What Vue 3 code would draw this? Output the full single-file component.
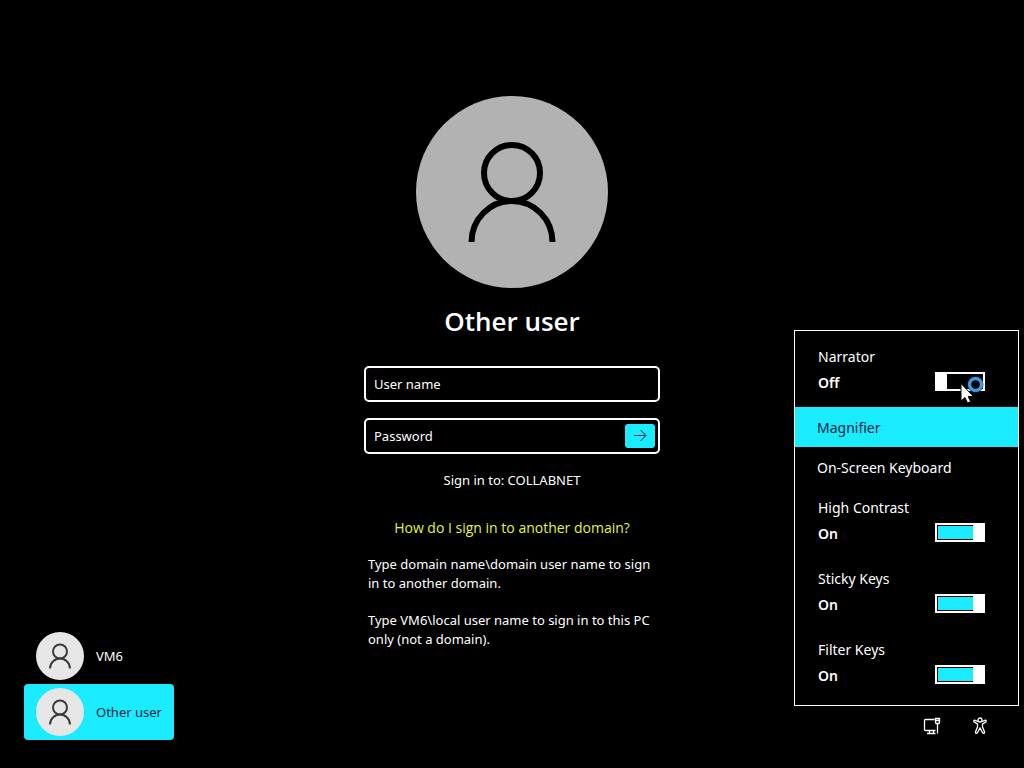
<script setup>
import { ref } from 'vue'

const users = ref([
  { name: 'VM6', selected: false },
  { name: 'Other user', selected: true },
])
const narrator = ref(false)
const toggles = ref([
  { id: 'contrast', label: 'High Contrast', on: true },
  { id: 'sticky', label: 'Sticky Keys', on: true },
  { id: 'filter', label: 'Filter Keys', on: true },
])
const userName = ref('')
const password = ref('')
</script>

<template>
  <div class="screen">
    <nav class="users" aria-label="Users">
      <button
        v-for="user in users"
        :key="user.name"
        type="button"
        class="user"
        :class="{ selected: user.selected }"
      >
        <span class="user-avatar">
          <svg viewBox="0 0 48 48" aria-hidden="true">
            <circle cx="24" cy="19.500" r="7" />
            <path d="M14 36.500a10 10 0 0 1 20 0" />
          </svg>
        </span>
        <span>{{ user.name }}</span>
      </button>
    </nav>

    <main class="login">
      <svg class="avatar" viewBox="0 0 192 192" aria-hidden="true">
        <circle class="avatar-disc" cx="96" cy="96" r="96" />
        <circle class="avatar-line" cx="96" cy="77" r="28" />
        <path class="avatar-line" d="M55.500 146a40.500 41 0 0 1 81 0" />
      </svg>
      <h1>Other user</h1>
      <form class="fields" @submit.prevent>
        <div class="field">
          <input v-model="userName" type="text" placeholder="User name" aria-label="User name" />
        </div>
        <div class="field">
          <input v-model="password" type="password" placeholder="Password" aria-label="Password" />
          <button type="submit" class="submit" aria-label="Submit">
            <svg viewBox="0 0 30 24" aria-hidden="true">
              <path d="M9 11.500H21M15.500 6L21 11.500L15.500 17" />
            </svg>
          </button>
        </div>
      </form>
      <p class="domain">Sign in to: COLLABNET</p>
      <a class="help" href="#">How do I sign in to another domain?</a>
      <div class="hints">
        <p>Type domain name\domain user name to sign in to another domain.</p>
        <p>Type VM6\local user name to sign in to this PC only (not a domain).</p>
      </div>
    </main>

    <aside class="side">
      <section class="panel" aria-label="Accessibility">
        <div class="option">
          <label for="narrator">Narrator</label>
          <div class="state">
            <strong>{{ narrator ? 'On' : 'Off' }}</strong>
            <input id="narrator" v-model="narrator" class="switch" type="checkbox" />
          </div>
          <svg class="pointer" viewBox="0 0 30 32" aria-hidden="true">
            <circle class="busy-back" cx="18.500" cy="12.500" r="6" />
            <circle class="busy" cx="18.500" cy="12.500" r="6" />
            <path class="arrow" d="M4 11.500V29L8 25.500L10.500 31L13.600 29.600L11.200 24.500H16.500Z" />
          </svg>
        </div>
        <button type="button" class="action active">Magnifier</button>
        <button type="button" class="action">On-Screen Keyboard</button>
        <div v-for="item in toggles" :key="item.id" class="option">
          <label :for="item.id">{{ item.label }}</label>
          <div class="state">
            <strong>{{ item.on ? 'On' : 'Off' }}</strong>
            <input :id="item.id" v-model="item.on" class="switch" type="checkbox" />
          </div>
        </div>
      </section>
      <div class="tools">
        <button type="button" class="tool" aria-label="Network">
          <svg viewBox="0 0 20 20" aria-hidden="true">
            <path d="M12.500 3.500H3.500a1 1 0 0 0-1 1V13.500a1 1 0 0 0 1 1H13.500M5 17.500H13.500M7.500 14.500V17.500M11.500 14.500V17.500M13.500 2.500H17.500V6.500a1 1 0 0 1-1 1H14.500a1 1 0 0 1-1-1ZM13.500 4.500H17.500M15.500 7.500V17.500" />
          </svg>
        </button>
        <button type="button" class="tool" aria-label="Accessibility">
          <svg viewBox="0 0 20 20" aria-hidden="true">
            <circle cx="10" cy="4" r="2" />
            <path d="M8 5.500L5.200 4.300C3.800 3.800 3.200 5.600 4.400 6.200L7.500 7.800V11L5.500 15.800C5 17.300 6.700 18 7.400 16.600L10 12L12.600 16.600C13.300 18 15 17.300 14.500 15.800L12.500 11V7.800L15.600 6.200C16.800 5.600 16.200 3.800 14.800 4.300L12 5.500" />
          </svg>
        </button>
      </div>
    </aside>
  </div>
</template>

<style>
body {
  margin: 0;
  background: #000;
}
</style>

<style scoped>
.screen {
  display: grid;
  grid-template-columns: minmax(0, 1fr) 296px minmax(0, 1fr);
  box-sizing: border-box;
  min-height: 100vh;
  background: #000;
  color: #fff;
  font-family: "Noto Sans", "Open Sans", sans-serif;
  font-size: 13px;
}

button {
  padding: 0;
  border: 0;
  background: none;
  color: inherit;
  font: inherit;
}

h1,
p {
  margin: 0;
}

svg {
  display: block;
}

.users {
  display: flex;
  flex-direction: column;
  align-items: flex-start;
  align-self: end;
  padding: 0 0 28px 24px;
}

.user {
  display: flex;
  align-items: center;
  gap: 12px;
  width: 150px;
  height: 56px;
  padding-left: 12px;
  border-radius: 4px;
}

.user.selected {
  background: #1aebff;
  color: #04263c;
}

.user-avatar {
  width: 48px;
  height: 48px;
  border-radius: 50%;
  background: #e6e6e6;
}

.user-avatar svg {
  fill: none;
  stroke: #3c3c3c;
  stroke-width: 2;
}

.login {
  display: flex;
  flex-direction: column;
  align-items: center;
  padding-top: 96px;
}

.avatar {
  width: 192px;
  height: 192px;
}

.avatar-disc {
  fill: #b2b2b2;
}

.avatar-line {
  fill: none;
  stroke: #000;
  stroke-width: 6;
}

h1 {
  margin-top: 13px;
  font-family: "Open Sans", sans-serif;
  font-size: 26px;
  font-weight: 600;
  line-height: 40px;
}

.fields {
  display: flex;
  flex-direction: column;
  gap: 16px;
  width: 100%;
  margin-top: 25px;
}

.field {
  display: flex;
  align-items: center;
  box-sizing: border-box;
  height: 36px;
  padding: 0 3px 0 8px;
  border: 2px solid #fff;
  border-radius: 5px;
}

.field input {
  flex: 1;
  min-width: 0;
  padding: 0;
  border: 0;
  outline: 0;
  background: none;
  color: #fff;
  font: inherit;
}

.field input::placeholder {
  color: #fff;
  opacity: 1;
}

.submit {
  width: 30px;
  height: 24px;
  border-radius: 3px;
  background: #1aebff;
}

.submit svg {
  fill: none;
  stroke: #04263c;
  stroke-width: 1;
}

.domain {
  margin-top: 16px;
  line-height: 20px;
}

.help {
  margin-top: 28px;
  color: #e3f53c;
  font-family: "Open Sans", sans-serif;
  font-size: 14px;
  line-height: 20px;
  text-decoration: none;
}

.hints {
  display: flex;
  flex-direction: column;
  gap: 18px;
  align-self: stretch;
  margin-top: 17px;
  padding-left: 4px;
  line-height: 19px;
}

.side {
  display: flex;
  flex-direction: column;
  align-items: flex-end;
  align-self: end;
  padding: 0 5px 32px 0;
}

.panel {
  box-sizing: border-box;
  width: 225px;
  padding: 5px 0;
  border: 1px solid #fff;
  font-size: 14px;
}

.option {
  position: relative;
  height: 71px;
  padding: 8px 33px 0 23px;
  box-sizing: border-box;
  line-height: 26px;
}

.option label {
  display: block;
}

.state {
  display: flex;
  align-items: center;
  justify-content: space-between;
  height: 26px;
}

.state strong {
  font-weight: 600;
}

.switch {
  appearance: none;
  box-sizing: border-box;
  width: 50px;
  height: 19px;
  margin: 0 0 4px;
  padding: 1px;
  border: 2px solid #fff;
  background: linear-gradient(#fff, #fff) left / 10px 100% no-repeat padding-box;
}

.switch:checked {
  background:
    linear-gradient(#fff, #fff) right / 10px 100% no-repeat padding-box,
    linear-gradient(#1aebff, #1aebff) content-box;
}

.pointer {
  position: absolute;
  top: 36px;
  right: 31px;
  width: 30px;
  height: 32px;
}

.busy-back {
  fill: #000;
  stroke: #123f70;
  stroke-width: 4;
}

.busy {
  fill: none;
  stroke: #3f9be6;
  stroke-width: 3;
}

.arrow {
  fill: #fff;
  stroke: #000;
  stroke-width: 1;
}

.action {
  display: block;
  width: 100%;
  height: 40px;
  padding-left: 22px;
  text-align: left;
}

.action.active {
  background: #1aebff;
  color: #04263c;
}

.tools {
  display: flex;
  gap: 28px;
  margin-top: 10px;
  padding-right: 29px;
}

.tool svg {
  width: 20px;
  height: 20px;
  fill: none;
  stroke: #fff;
  stroke-width: 1.3;
}
</style>
